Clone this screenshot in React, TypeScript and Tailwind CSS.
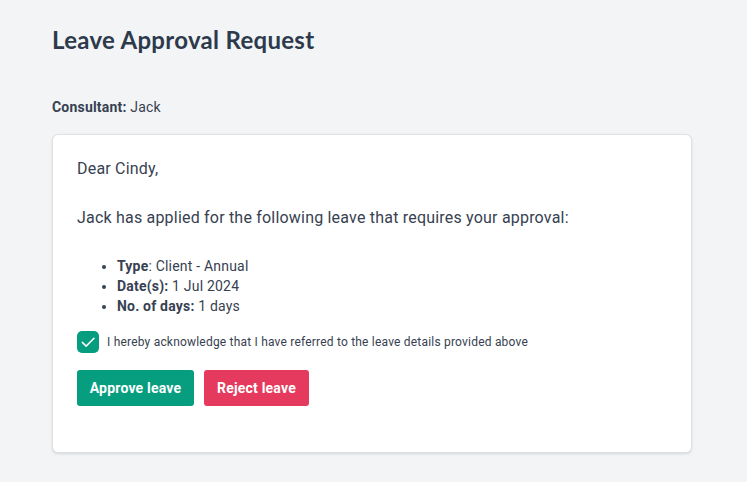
import React from "react";

export default function App() {
  return (
    <div className="min-h-[482px] w-full bg-[#f3f4f6] px-[52px] pt-6 text-[#374151] tracking-[0.2px]" style={{ fontFamily: "Roboto, 'Liberation Sans', sans-serif" }}>
      <h1 className="text-[24px] leading-8 font-bold text-[#2d3a4b] tracking-[0.3px]" style={{ fontFamily: "Lato, 'Liberation Sans', sans-serif" }}>
        Leave Approval Request
      </h1>
      <p className="mt-[41px] text-sm leading-5">
        <span className="font-bold">Consultant:</span> Jack
      </p>
      <div className="mt-[17px] w-[640px] rounded-md border border-[#dfe1e5] bg-white px-6 pt-[22px] pb-[46px] shadow-sm">
        <p className="text-base leading-6">Dear Cindy,</p>
        <p className="mt-[25px] text-base leading-6">Jack has applied for the following leave that requires your approval:</p>
        <ul className="mt-[26px] list-disc pl-10 text-sm leading-5">
          <li><span className="font-bold">Type</span>: Client - Annual</li>
          <li><span className="font-bold">Date(s):</span> 1 Jul 2024</li>
          <li><span className="font-bold">No. of days:</span> 1 days</li>
        </ul>
        <div className="mt-[15px] flex items-center gap-2">
          <div className="flex h-[22px] w-[22px] items-center justify-center rounded-[5px] bg-[#069e7f]">
            <svg width="18" height="18" viewBox="0 0 24 24" fill="none" stroke="white" strokeWidth="2" strokeLinecap="round" strokeLinejoin="round">
              <path d="M4.5 12.5l5 5L20 7" />
            </svg>
          </div>
          <span className="text-xs leading-4">I hereby acknowledge that I have referred to the leave details provided above</span>
        </div>
        <div className="mt-[17px] flex gap-[10px]">
          <button className="h-9 w-[117px] rounded-[3px] bg-[#069e7f] text-sm font-bold text-white">Approve leave</button>
          <button className="h-9 w-[105px] rounded-[3px] bg-[#e53a5d] text-sm font-bold text-white">Reject leave</button>
        </div>
      </div>
    </div>
  );
}
